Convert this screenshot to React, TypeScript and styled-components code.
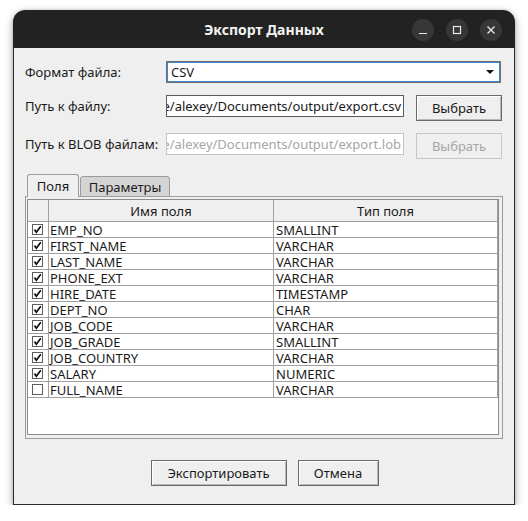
import React from "react";
import styled, { createGlobalStyle } from "styled-components";

const GlobalStyle = createGlobalStyle`
  html, body { margin: 0; padding: 0; background: #ffffff; }
  body { font-family: "Noto Sans", "Open Sans", sans-serif; font-size: 13px; color: #1a1a1a; }
  * { box-sizing: border-box; }
`;

const Window = styled.div`
  margin: 10px 0 0 13px;
  width: 502px;
  height: 495px;
  display: flex;
  flex-direction: column;
  border-radius: 12px 12px 0 0;
  box-shadow: 0 3px 9px rgba(0, 0, 0, 0.35), 0 0 3px rgba(0, 0, 0, 0.15);
  overflow: hidden;
`;

const TitleBar = styled.div`
  height: 38px;
  flex: none;
  background: #222222;
  display: grid;
  grid-template-columns: 1fr auto 1fr;
  align-items: center;
`;

const Title = styled.div`
  grid-column: 2;
  color: #f2f2f2;
  font-weight: 700;
  font-size: 14px;
  letter-spacing: 0;
`;

const Controls = styled.div`
  grid-column: 3;
  justify-self: end;
  display: flex;
  gap: 12px;
  padding-right: 13px;
  padding-top: 2px;
`;

const CircleButton = styled.div`
  width: 22px;
  height: 22px;
  border-radius: 50%;
  background: #373737;
  display: flex;
  align-items: center;
  justify-content: center;
`;

const Body = styled.div`
  flex: 1;
  background: #efefef;
  border: 1px solid #2a2a2a;
  border-top: none;
  padding: 13px 12px 0 11px;
  display: flex;
  flex-direction: column;
`;

const Form = styled.div`
  display: grid;
  grid-template-columns: 129px 238px 86px;
  column-gap: 12px;
  row-gap: 12px;
  align-items: center;
`;

const Label = styled.div<{ $top?: boolean }>`
  white-space: nowrap;
  align-self: ${(p) => (p.$top ? "start" : "center")};
  line-height: ${(p) => (p.$top ? "23px" : "normal")};
`;

const Combo = styled.div`
  grid-column: 2 / 4;
  margin-right: 1px;
  height: 22px;
  border: 1px solid #6e6e6e;
  background: #ffffff;
  display: flex;
`;

const ComboInner = styled.div`
  flex: 1;
  border: 1px solid #3c86d6;
  display: flex;
  align-items: center;
  justify-content: space-between;
  padding: 0 5px 0 3px;
`;

const Arrow = styled.div`
  width: 0;
  height: 0;
  border-left: 4px solid transparent;
  border-right: 4px solid transparent;
  border-top: 4px solid #111;
`;

const Input = styled.div<{ $disabled?: boolean }>`
  align-self: start;
  height: 22px;
  background: #ffffff;
  border: 1px solid ${(p) => (p.$disabled ? "#c4c4c4" : "#5a5a5a")};
  color: ${(p) => (p.$disabled ? "#a6a6a6" : "#1a1a1a")};
  display: flex;
  justify-content: flex-end;
  align-items: center;
  overflow: hidden;
  white-space: nowrap;
  padding-right: 2px;
`;

const Button = styled.button<{ $disabled?: boolean; $w?: number }>`
  height: 26px;
  width: ${(p) => (p.$w ? `${p.$w}px` : "auto")};
  font-family: "Noto Sans", "Open Sans", sans-serif;
  font-size: 13px;
  color: ${(p) => (p.$disabled ? "#a6a6a6" : "#1a1a1a")};
  background: #efefef;
  border: 1px solid ${(p) => (p.$disabled ? "#c6c6c6" : "#6a6a6a")};
  box-shadow: ${(p) =>
    p.$disabled ? "none" : "inset 1px 1px 0 #ffffff, inset -1px -1px 0 #b8b8b8"};
  padding: 0;
  margin: 0;
`;

const Tabs = styled.div`
  margin-top: 16px;
  display: flex;
  flex-direction: column;
`;

const TabBar = styled.div`
  display: flex;
  align-items: flex-end;
  height: 22px;
  padding-left: 2px;
  gap: 1px;
  margin-bottom: -1px;
  position: relative;
  z-index: 1;
`;

const Tab = styled.div<{ $active?: boolean; $w: number }>`
  width: ${(p) => p.$w}px;
  height: ${(p) => (p.$active ? 23 : 21)}px;
  background: ${(p) => (p.$active ? "#efefef" : "#d4d4d4")};
  border: 1px solid #9c9c9c;
  border-bottom: ${(p) => (p.$active ? "none" : "1px solid #9c9c9c")};
  border-radius: 3px 3px 0 0;
  display: flex;
  align-items: center;
  justify-content: center;
  padding-bottom: ${(p) => (p.$active ? 1 : 0)}px;
`;

const Pane = styled.div`
  height: 243px;
  margin-right: -1px;
  border: 1px solid #9c9c9c;
  background: #efefef;
  padding: 2px 3px 3px 1px;
  display: flex;
`;

const Table = styled.div`
  flex: 1;
  background: #ffffff;
  border: 1px solid #8c8c8c;
  display: grid;
  grid-template-columns: 21px 225px 1fr;
  grid-template-rows: 22px;
  grid-auto-rows: 16px;
  align-content: start;
`;

const HeadCell = styled.div`
  background: #efefef;
  border-right: 1px solid #a0a0a0;
  border-bottom: 1px solid #a0a0a0;
  display: flex;
  align-items: center;
  justify-content: center;
`;

const Cell = styled.div<{ $last?: boolean }>`
  border-right: 1px solid #a0a0a0;
  border-bottom: 1px solid #a0a0a0;
  display: flex;
  align-items: center;
  padding-left: ${(p) => (p.$last ? 2 : 1)}px;
  padding-top: 1px;
  white-space: nowrap;
  overflow: hidden;
  line-height: 15px;
`;

const CheckCell = styled.div`
  border-right: 1px solid #a0a0a0;
  border-bottom: 1px solid #a0a0a0;
  display: flex;
  align-items: center;
  padding-left: 4px;
`;

const Box = styled.div`
  width: 11px;
  height: 11px;
  border: 1px solid #5c5c5c;
  background: #ffffff;
  display: flex;
  align-items: center;
  justify-content: center;
`;

const Footer = styled.div`
  margin-top: 21px;
  display: flex;
  justify-content: center;
  gap: 11px;
  padding-left: 2px;
`;

const rows: [string, string, boolean][] = [
  ["EMP_NO", "SMALLINT", true],
  ["FIRST_NAME", "VARCHAR", true],
  ["LAST_NAME", "VARCHAR", true],
  ["PHONE_EXT", "VARCHAR", true],
  ["HIRE_DATE", "TIMESTAMP", true],
  ["DEPT_NO", "CHAR", true],
  ["JOB_CODE", "VARCHAR", true],
  ["JOB_GRADE", "SMALLINT", true],
  ["JOB_COUNTRY", "VARCHAR", true],
  ["SALARY", "NUMERIC", true],
  ["FULL_NAME", "VARCHAR", false],
];

const Check = () => (
  <svg width="9" height="9" viewBox="0 0 9 9">
    <path d="M1.5 4.5 L3.3 7.3 L7.8 1.2" fill="none" stroke="#111" strokeWidth="1.7" />
  </svg>
);

export default function App() {
  return (
    <>
      <GlobalStyle />
      <Window>
        <TitleBar>
          <Title>Экспорт Данных</Title>
          <Controls>
            <CircleButton>
              <svg width="10" height="10" viewBox="0 0 10 10">
                <path d="M1 8.5 H9" stroke="#e8e8e8" strokeWidth="1.2" />
              </svg>
            </CircleButton>
            <CircleButton>
              <svg width="10" height="10" viewBox="0 0 10 10">
                <rect x="1.5" y="1.5" width="7" height="7" fill="none" stroke="#e8e8e8" strokeWidth="1.2" />
              </svg>
            </CircleButton>
            <CircleButton>
              <svg width="10" height="10" viewBox="0 0 10 10">
                <path d="M1.5 1.5 L8.5 8.5 M8.5 1.5 L1.5 8.5" stroke="#e8e8e8" strokeWidth="1.3" />
              </svg>
            </CircleButton>
          </Controls>
        </TitleBar>
        <Body>
          <Form>
            <Label>Формат файла:</Label>
            <Combo>
              <ComboInner>
                <span>CSV</span>
                <Arrow />
              </ComboInner>
            </Combo>
            <Label $top>Путь к файлу:</Label>
            <Input>/home/alexey/Documents/output/export.csv</Input>
            <Button>Выбрать</Button>
            <Label $top>Путь к BLOB файлам:</Label>
            <Input $disabled>/home/alexey/Documents/output/export.lob</Input>
            <Button $disabled>Выбрать</Button>
          </Form>
          <Tabs>
            <TabBar>
              <Tab $active $w={52}>Поля</Tab>
              <Tab $w={90}>Параметры</Tab>
            </TabBar>
            <Pane>
              <Table>
                <HeadCell />
                <HeadCell>Имя поля</HeadCell>
                <HeadCell>Тип поля</HeadCell>
                {rows.map(([name, type, checked]) => (
                  <React.Fragment key={name}>
                    <CheckCell>
                      <Box>{checked && <Check />}</Box>
                    </CheckCell>
                    <Cell>{name}</Cell>
                    <Cell $last>{type}</Cell>
                  </React.Fragment>
                ))}
              </Table>
            </Pane>
          </Tabs>
          <Footer>
            <Button $w={136}>Экспортировать</Button>
            <Button $w={81}>Отмена</Button>
          </Footer>
        </Body>
      </Window>
    </>
  );
}
